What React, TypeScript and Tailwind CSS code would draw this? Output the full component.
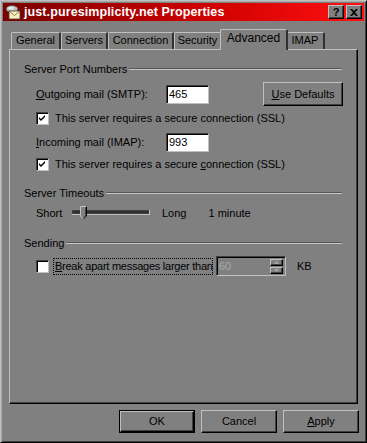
import React from 'react';

const raised =
  'border border-t-[#c0c0c0] border-l-[#c0c0c0] border-r-black border-b-black shadow-[inset_-1px_-1px_0_#404040]';
const sunken =
  'border border-t-[#404040] border-l-[#404040] border-r-[#c0c0c0] border-b-[#c0c0c0] shadow-[inset_1px_1px_0_#000]';

function CheckBox({ checked }: { checked?: boolean }) {
  return (
    <div className={`w-[13px] h-[13px] shrink-0 bg-white ${sunken}`}>
      {checked && (
        <svg width="11" height="11" viewBox="0 0 11 11" className="block">
          <path d="M2 4 L4 6 L8 2 L8 4 L4 8 L2 6 Z" fill="#000" />
        </svg>
      )}
    </div>
  );
}

function GroupHeader({ label, className = '' }: { label: string; className?: string }) {
  return (
    <div className={`flex items-center h-[14px] ${className}`}>
      <span className="pr-[2px]">{label}</span>
      <div className="flex-1 h-[2px] border-t border-t-[#555] border-b border-b-[#c8c8c8]" />
    </div>
  );
}

function Tab({ label, w, active }: { label: string; w: string; active?: boolean }) {
  if (active) {
    return (
      <div
        className={`${w} -mx-[2px] relative z-10 h-[21px] -mb-px bg-[#808080] border-l border-t border-t-[#c0c0c0] border-l-[#c0c0c0] border-r-2 border-r-[#303030] rounded-t-[2px] flex items-start justify-center pt-[2px] text-[12px]`}
      >
        {label}
      </div>
    );
  }
  return (
    <div
      className={`${w} h-[17px] border-l border-t border-t-[#c0c0c0] border-l-[#c0c0c0] border-r-2 border-r-[#303030] rounded-t-[2px] flex items-center justify-center pb-[1px]`}
    >
      {label}
    </div>
  );
}

function TitleIcon() {
  return (
    <svg width="16" height="16" viewBox="0 0 16 16" className="shrink-0">
      <ellipse cx="7" cy="5" rx="6" ry="3.5" fill="#c0c0c0" stroke="#404040" strokeWidth="0.8" />
      <ellipse cx="6" cy="4" rx="3" ry="1.5" fill="#e8e8e8" />
      <rect x="4" y="7" width="11" height="8" fill="#f8f0c0" stroke="#404040" strokeWidth="0.8" />
      <path d="M4 7 L9.5 11.5 L15 7" fill="none" stroke="#806020" strokeWidth="0.8" />
    </svg>
  );
}

export default function App() {
  return (
    <div
      className="w-[367px] h-[443px] bg-[#808080] border border-t-[#c0c0c0] border-l-[#c0c0c0] border-r-black border-b-black shadow-[inset_1px_1px_0_#a8a8a8,inset_-1px_-1px_0_#404040] p-[2px] text-black text-[11px] leading-none overflow-hidden"
      style={{ fontFamily: '"Liberation Sans", Arial, sans-serif' }}
    >
      {/* Title bar */}
      <div className="h-[18px] bg-gradient-to-r from-[#7a0000] via-[#c80000] to-[#ff1010] flex items-center pl-[2px] pr-[2px]">
        <TitleIcon />
        <span className="ml-[3px] text-white font-bold text-[12.5px] tracking-[0.1px]">
          just.puresimplicity.net Properties
        </span>
        <div className="ml-auto flex gap-[2px]">
          <div className={`w-[16px] h-[14px] bg-[#808080] ${raised} flex items-center justify-center font-bold text-[11px]`}>
            ?
          </div>
          <div className={`w-[16px] h-[14px] bg-[#808080] ${raised} flex items-center justify-center`}>
            <svg width="8" height="7" viewBox="0 0 8 7">
              <path d="M0 0 L2 0 L4 2 L6 0 L8 0 L5 3.5 L8 7 L6 7 L4 5 L2 7 L0 7 L3 3.5 Z" fill="#000" />
            </svg>
          </div>
        </div>
      </div>

      {/* Tabs */}
      <div className="mt-[8px] ml-[8px] flex items-end h-[20px]">
        <Tab label="General" w="w-[50px]" />
        <Tab label="Servers" w="w-[47px]" />
        <Tab label="Connection" w="w-[66px]" />
        <Tab label="Security" w="w-[48px]" />
        <Tab label="Advanced" w="w-[68px]" active />
        <Tab label="IMAP" w="w-[39px]" />
      </div>

      {/* Panel */}
      <div className="ml-[6px] w-[349px] h-[355px] border border-t-[#c0c0c0] border-l-[#c0c0c0] border-r-black border-b-black shadow-[inset_-1px_-1px_0_#404040] pl-[14px] pr-[15px] pt-[12px]">
        <GroupHeader label="Server Port Numbers" />

        <div className="mt-[6px] pl-[12px] flex items-center h-[24px]">
          <span className="w-[130px]">
            <u>O</u>utgoing mail (SMTP):
          </span>
          <div className={`w-[43px] h-[19px] bg-white ${sunken} flex items-center pl-[2px]`}>465</div>
          <div className={`ml-auto mr-[-1px] w-[80px] h-[24px] ${raised} flex items-center justify-center`}>
            <span>
              <u>U</u>se Defaults
            </span>
          </div>
        </div>

        <div className="mt-[6px] pl-[12px] flex items-center h-[13px] gap-[6px]">
          <CheckBox checked />
          <span>This server requires a secure connection (SSL)</span>
        </div>

        <div className="mt-[8px] pl-[12px] flex items-center h-[19px]">
          <span className="w-[130px]">
            <u>I</u>ncoming mail (IMAP):
          </span>
          <div className={`w-[43px] h-[19px] bg-white ${sunken} flex items-center pl-[2px]`}>993</div>
        </div>

        <div className="mt-[6px] pl-[12px] flex items-center h-[13px] gap-[6px]">
          <CheckBox checked />
          <span>
            This server requires a secure <u>c</u>onnection (SSL)
          </span>
        </div>

        <GroupHeader label="Server Timeouts" className="mt-[15px]" />

        <div className="mt-[6px] pl-[12px] flex items-center h-[14px]">
          <span className="w-[36px]">Short</span>
          <svg width="80" height="14" viewBox="0 0 80 14" className="shrink-0">
            <rect x="0" y="4" width="78" height="4" fill="#404040" />
            <rect x="1" y="5" width="76" height="2" fill="#303030" />
            <line x1="0" y1="8.5" x2="78" y2="8.5" stroke="#c0c0c0" />
            <line x1="77.5" y1="4" x2="77.5" y2="9" stroke="#c0c0c0" />
            <path d="M8.5 0.5 L14.5 0.5 L14.5 10 L11.5 13 L8.5 10 Z" fill="#808080" stroke="#c0c0c0" />
            <path d="M14.5 0.5 L14.5 10 L11.5 13" fill="none" stroke="#000" />
            <path d="M13.5 1.5 L13.5 9.5 L11.5 11.5" fill="none" stroke="#404040" />
          </svg>
          <span className="ml-[10px]">Long</span>
          <span className="ml-[22px]">1 minute</span>
        </div>

        <GroupHeader label="Sending" className="mt-[16px]" />

        <div className="mt-[6px] pl-[12px] flex items-center h-[20px]">
          <CheckBox />
          <div className="ml-[4px] h-[17px] w-[160px] shrink-0 border border-dotted border-black flex items-center pl-[1px] whitespace-nowrap tracking-[-0.25px]">
            <span>
              <u>B</u>reak apart messages larger than
            </span>
          </div>
          <div className={`ml-[3px] w-[70px] h-[20px] shrink-0 bg-[#808080] ${sunken} flex items-center`}>
            <span className="pl-[2px] text-[#a8a8a8] flex-1">60</span>
            <div className="flex flex-col gap-px mr-[2px]">
              <div className={`w-[13px] h-[7px] ${raised} flex items-center justify-center`}>
                <svg width="5" height="3" viewBox="0 0 5 3"><path d="M2.5 0 L5 3 L0 3 Z" fill="#a8a8a8" /></svg>
              </div>
              <div className={`w-[13px] h-[7px] ${raised} flex items-center justify-center`}>
                <svg width="5" height="3" viewBox="0 0 5 3"><path d="M0 0 L5 0 L2.5 3 Z" fill="#a8a8a8" /></svg>
              </div>
            </div>
          </div>
          <span className="ml-[11px]">KB</span>
        </div>
      </div>

      {/* Dialog buttons */}
      <div className="mt-[6px] flex justify-end gap-[6px] pr-[5px]">
        <div className="w-[76px] h-[23px] border border-black">
          <div className={`w-full h-full ${raised} flex items-center justify-center`}>OK</div>
        </div>
        <div className={`w-[76px] h-[23px] ${raised} flex items-center justify-center`}>Cancel</div>
        <div className={`w-[76px] h-[23px] ${raised} flex items-center justify-center`}>
          <span>
            <u>A</u>pply
          </span>
        </div>
      </div>
    </div>
  );
}
